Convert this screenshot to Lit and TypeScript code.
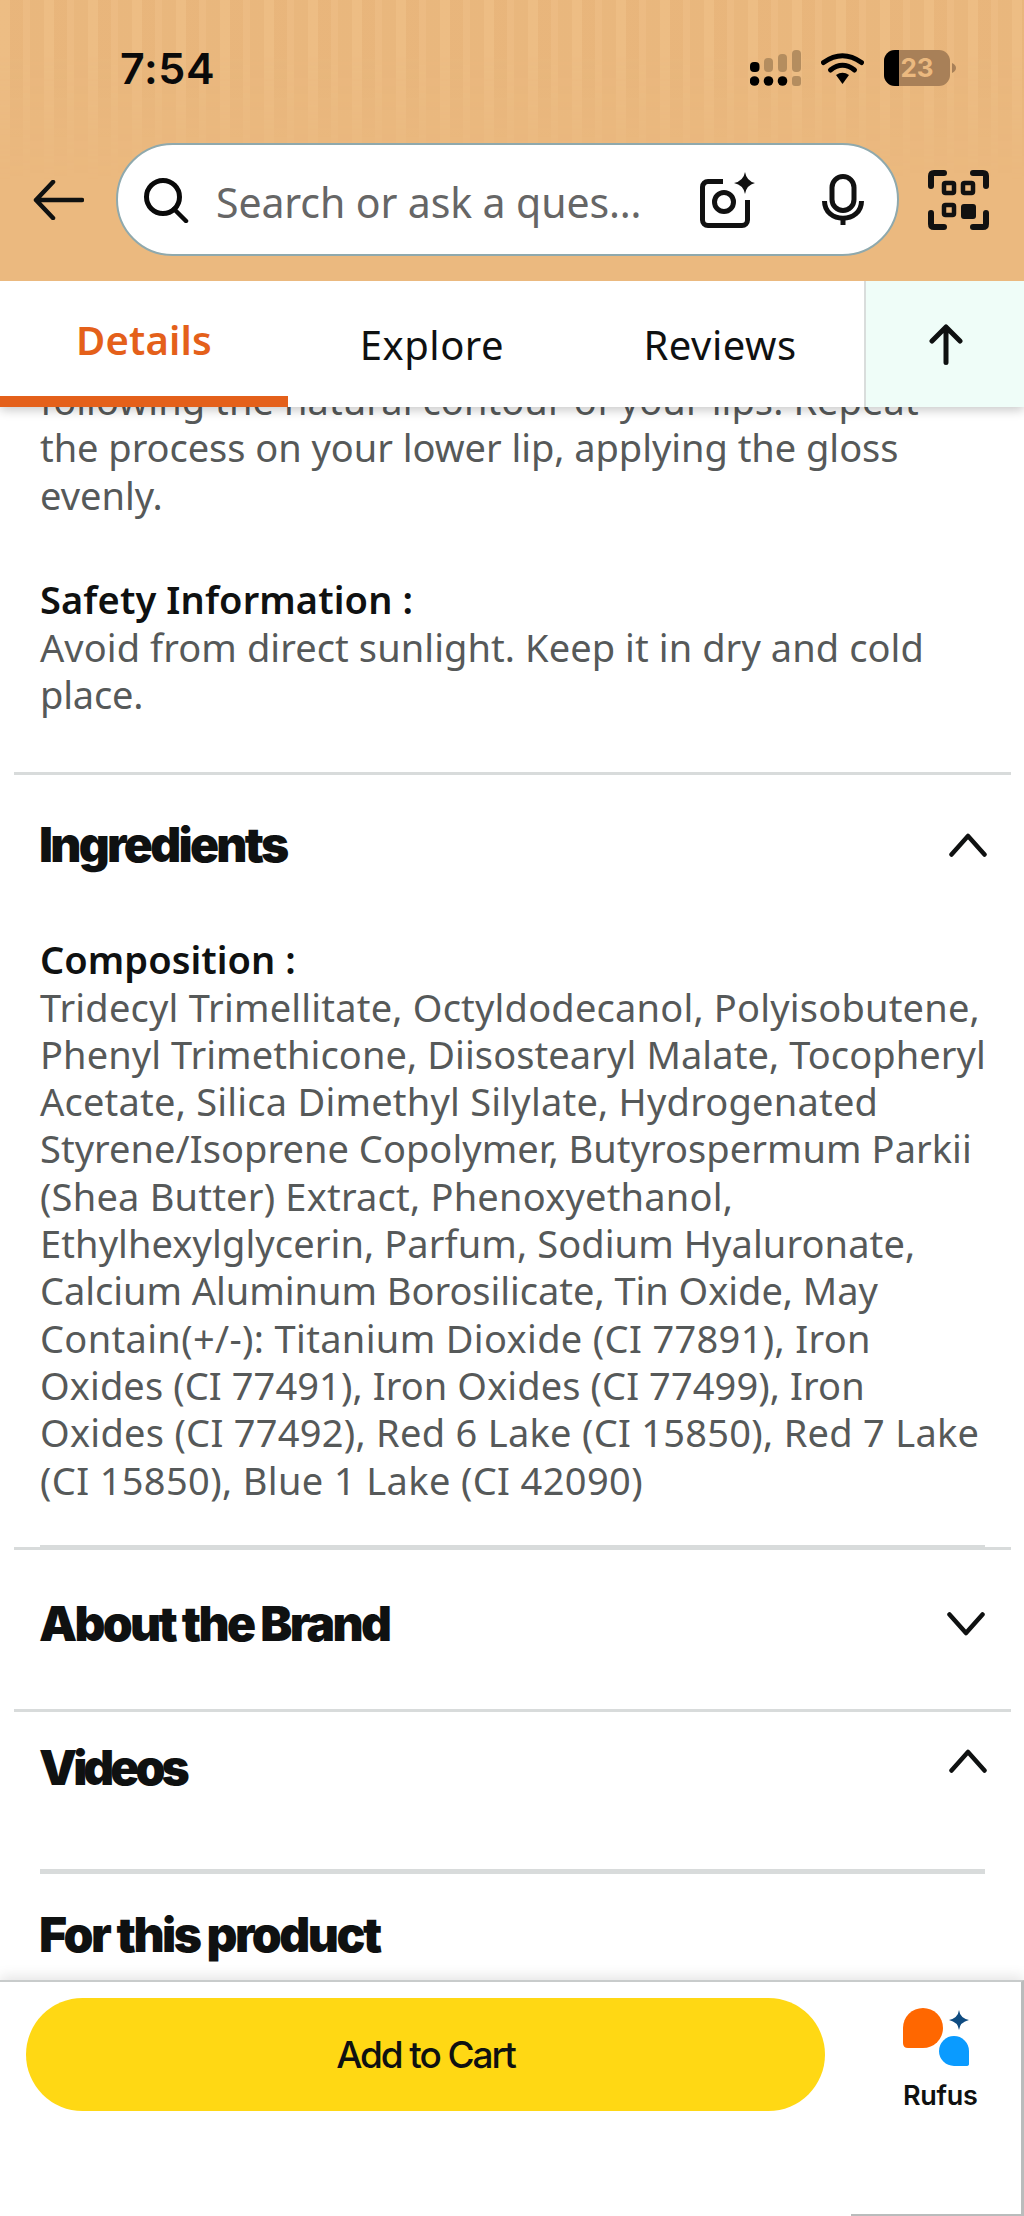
import { LitElement, html, css, svg } from "lit";
import { customElement } from "lit/decorators.js";

type Line = [string, number];

const usage: Line[] = [
  ["following the natural contour of your lips. Repeat", 0.08],
  ["the process on your lower lip, applying the gloss", -0.04],
  ["evenly.", 0],
];
const safety: Line[] = [
  ["Avoid from direct sunlight. Keep it in dry and cold", 0.08],
  ["place.", -0.2],
];
const composition: Line[] = [
  ["Tridecyl Trimellitate, Octyldodecanol, Polyisobutene,", 0.2],
  ["Phenyl Trimethicone, Diisostearyl Malate, Tocopheryl", 0.09],
  ["Acetate, Silica Dimethyl Silylate, Hydrogenated", 0.22],
  ["Styrene/Isoprene Copolymer, Butyrospermum Parkii", 0.05],
  ["(Shea Butter) Extract, Phenoxyethanol,", 0.21],
  ["Ethylhexylglycerin, Parfum, Sodium Hyaluronate,", 0.1],
  ["Calcium Aluminum Borosilicate, Tin Oxide, May", -0.03],
  ["Contain(+/-): Titanium Dioxide (CI 77891), Iron", 0.34],
  ["Oxides (CI 77491), Iron Oxides (CI 77499), Iron", 0.1],
  ["Oxides (CI 77492), Red 6 Lake (CI 15850), Red 7 Lake", 0.28],
  ["(CI 15850), Blue 1 Lake (CI 42090)", 0.37],
];

const lines = (rows: Line[]) =>
  rows.map(([t, ls]) => html`<span class="ln" style="letter-spacing:${ls}px">${t}</span>`);

const chevron = (up: boolean) => html`<svg class="chev" width="38" height="24" viewBox="0 0 38 24" fill="none" stroke="#0f1111" stroke-width="4.500" stroke-linecap="round" stroke-linejoin="round">
  ${up ? svg`<path d="M2.500 21.500 L19 3 L35.500 21.500"/>` : svg`<path d="M2.500 2.500 L19 21 L35.500 2.500"/>`}
</svg>`;

@customElement("app-root")
export class AppRoot extends LitElement {
  static styles = css`
    :host { display: block; width: 1024px; height: 2216px; overflow: hidden; background: #fff; color: #0f1111; font-family: "Noto Sans", sans-serif; }
    .page { display: flex; flex-direction: column; height: 2216px; }
    .header { position: relative; flex: none; height: 281px; background: #ebb97f; display: flex; flex-direction: column; z-index: 3; }
    .stripes { position: absolute; inset: 0 0 100px 0; background: repeating-linear-gradient(90deg, rgba(255,225,175,.1) 0 10px, rgba(190,130,70,.05) 10px 23px, rgba(255,225,175,.07) 23px 30px, rgba(190,130,70,.03) 30px 44px); -webkit-mask-image: linear-gradient(#000 30%, transparent); mask-image: linear-gradient(#000 30%, transparent); }
    .status { position: relative; height: 143px; padding: 50px 0 0 120px; box-sizing: border-box; display: flex; align-items: flex-start; }
    .time { font: 600 43px/36px Inter, sans-serif; color: #0a0a0a; width: 630px; letter-spacing: .6px; }
    .status-icons { display: flex; align-items: flex-start; gap: 20px; }
    .search-row { position: relative; display: flex; align-items: center; padding-left: 33px; height: 113px; }
    .back { flex: none; margin-right: 32px; }
    .searchbar { flex: none; width: 783px; height: 113px; box-sizing: border-box; border: 2.500px solid #8fa9ad; border-radius: 57px; background: #fff; display: flex; align-items: center; padding-left: 25px; }
    .placeholder { font-size: 41px; color: #666; margin-left: 27px; width: 484px; white-space: nowrap; letter-spacing: -.1px; padding-top: 5px; }
    .mic { margin-left: 67px; }
    .qr { margin-left: 29px; flex: none; }
    .tabs { flex: none; height: 126px; display: flex; background: #fff; position: relative; z-index: 2; box-shadow: 0 3px 10px rgba(0,0,0,.22); }
    .tab { flex: none; display: flex; justify-content: center; align-items: center; font-size: 40px; letter-spacing: .5px; box-sizing: border-box; }
    .tab.details { width: 288px; color: #e4601a; font-weight: 600; letter-spacing: .2px; border-bottom: 11px solid #e4601a; height: 126px; align-items: flex-start; padding-top: 33px; line-height: 52px; }
    .tab.explore { width: 288px; }
    .tab.reviews { width: 288px; }
    .up { flex: 1; background: #effdf8; border-left: 2px solid #d9dddc; display: flex; align-items: center; justify-content: center; padding: 1px 0 0 1px; }
    .scroll { flex: 1; min-height: 0; overflow: hidden; }
    .content { margin-top: -30px; }
    .copy { padding: 0 40px; font-size: 38px; line-height: 47.300px; color: #565959; white-space: nowrap; }
    .copy b { display: block; font-weight: 600; color: #0f1111; }
    .ln { display: block; }
    .copy + .copy { margin-top: 57.500px; }
    .rule { height: 3px; margin: 54px 13px 0 14px; background: #d8dbdb; }
    .sec { display: flex; justify-content: space-between; padding: 0 39px 0 39px; align-items: center; }
    h2 { margin: 0; font: 900 48px/56px Inter, sans-serif; letter-spacing: -2.700px; color: #0f1111; }
    .ing { margin-top: 42px; }
    .ing svg { margin-right: -2px; }
    .copy.ing-copy { margin-top: 63px; }
    .double-top { height: 2px; margin: 41px 39px 0 40px; background: #d8dbdb; }
    .double-bot { height: 3px; margin: 0 13px 0 14px; background: #d8dbdb; }
    .about { margin-top: 46px; }
    .rule2 { height: 3px; margin: 57px 13px 0 14px; background: #d8dbdb; }
    .videos { margin-top: 28px; align-items: flex-start; }
    .videos h2 { letter-spacing: -4px; }
    .videos svg { margin-top: 9px; margin-right: -2px; }
    .rule3 { height: 5px; margin: 73px 39px 0 40px; background: #d8dbdb; }
    .fort { padding: 33px 39px 0; }
    .fort h2 { letter-spacing: -2.500px; }
    .bar { flex: none; height: 236px; box-sizing: border-box; position: relative; z-index: 2; background: #fff; border-top: 2px solid #c8cbcb; border-right: 3px solid #b9bcbc; box-shadow: 0 -4px 12px rgba(0,0,0,.1); display: flex; align-items: flex-start; padding: 16px 0 0 26px; }
    .bar::after { content: ""; position: absolute; right: -3px; bottom: 0; width: 173px; height: 2px; background: #b9bcbc; }
    .cart { flex: none; width: 799px; height: 113px; border-radius: 57px; background: #ffd814; display: flex; align-items: center; justify-content: center; font: 500 37px/1 Inter, sans-serif; letter-spacing: -2.100px; color: #0f1111; border: none; padding: 0; box-sizing: border-box; }
    .rufus { margin-left: 78px; display: flex; flex-direction: column; align-items: flex-start; font: 600 27px/32px Inter, sans-serif; color: #0f1111; padding-top: 10px; letter-spacing: -.3px; }
    .rufus svg { margin-bottom: 12px; }
    svg { display: block; flex: none; }
  `;

  render() {
    return html`<div class="page">
      <div class="header">
        <div class="stripes"></div>
        <div class="status">
          <div class="time">7:54</div>
          <div class="status-icons">
            <svg width="51" height="36" viewBox="0 0 51 36">
              <g fill="#000"><circle cx="4.500" cy="31" r="4.800"/><circle cx="18.500" cy="31" r="4.800"/><circle cx="32.500" cy="31" r="4.800"/><rect x="0" y="12" width="9.500" height="10" rx="4"/></g>
              <g fill="#b48d5f"><rect x="14" y="8" width="9" height="14" rx="4"/><rect x="28" y="4" width="9" height="18" rx="4"/><rect x="42" y="0" width="9" height="22" rx="4"/><rect x="42" y="26" width="9" height="10" rx="3"/></g>
            </svg>
            <svg style="margin-top:2px" width="43" height="33" viewBox="0 0 43 33">
              <g fill="none" stroke="#000" stroke-linecap="round"><path d="M2.500 10.500 Q21.500 -3 40.500 10.500" stroke-width="5"/><path d="M9.500 18 Q21.500 8.500 33.500 18" stroke-width="5"/></g>
              <path d="M15 23 Q21.500 18.500 28 23 L21.500 32 Z" fill="#000"/>
            </svg>
            <svg width="73" height="36" viewBox="0 0 73 36">
              <rect x="0" y="0" width="66" height="36" rx="11" fill="#a88058"/>
              <path d="M15 0 H11 A11 11 0 0 0 0 11 V25 A11 11 0 0 0 11 36 H15 Z" fill="#000"/>
              <path d="M68 13 Q72 15 72 18 Q72 21 68 23 Z" fill="#a88058"/>
              <text x="33" y="27" text-anchor="middle" font-family="Inter, sans-serif" font-weight="700" font-size="26" fill="#ebb97f">23</text>
            </svg>
          </div>
        </div>
        <div class="search-row">
          <svg class="back" width="51" height="40" viewBox="0 0 51 40" fill="none" stroke="#0f1111" stroke-width="4.500" stroke-linecap="round" stroke-linejoin="round"><path d="M49 20 H3 M20 2 L3 20 L20 38"/></svg>
          <div class="searchbar">
            <svg width="46" height="46" viewBox="0 0 46 46" fill="none" stroke="#0a0a0a" stroke-linecap="round"><circle cx="20" cy="20" r="16.500" stroke-width="5"/><path d="M31 32 L43 44" stroke-width="4.500"/></svg>
            <div class="placeholder">Search or ask a ques…</div>
            <svg width="55" height="56" viewBox="0 0 55 56" fill="none" stroke="#111" stroke-width="5" stroke-linejoin="round">
              <path d="M23 9.500 H8 A5.500 5.500 0 0 0 2.500 15 V48 A5.500 5.500 0 0 0 8 53.500 H42 A5.500 5.500 0 0 0 47.500 48 V28"/>
              <circle cx="24" cy="30" r="9.500"/>
              <path d="M45 0 Q46.500 9 55 11 Q46.500 13 45 22 Q43.500 13 34 11 Q43.500 9 45 0 Z" fill="#111" stroke="none"/>
            </svg>
            <svg class="mic" width="42" height="51" viewBox="0 0 42 51" fill="none" stroke="#111" stroke-width="5">
              <rect x="10" y="2.500" width="22" height="34" rx="11"/>
              <path d="M2.500 27 C2.500 50 39.500 50 39.500 27"/>
              <path d="M21 42 V51"/>
            </svg>
          </div>
          <svg class="qr" width="61" height="60" viewBox="0 0 61 60" fill="none" stroke="#111" stroke-width="6" stroke-linecap="round" stroke-linejoin="round">
            <path d="M16 3 H6 Q3 3 3 6 V16"/>
            <path d="M45 3 H55 Q58 3 58 6 V16"/>
            <path d="M3 43 V54 Q3 57 6 57 H16"/>
            <path d="M58 43 V54 Q58 57 55 57 H45"/>
            <rect x="16" y="13" width="10" height="10" rx="1.500" stroke-width="4.500"/>
            <rect x="35" y="13" width="10" height="10" rx="1.500" stroke-width="4.500"/>
            <rect x="16" y="35" width="10" height="10" rx="1.500" stroke-width="4.500"/>
            <rect x="33" y="34" width="15" height="15" rx="3" fill="#111" stroke="none"/>
          </svg>
        </div>
      </div>
      <div class="tabs">
        <div class="tab details">Details</div>
        <div class="tab explore">Explore</div>
        <div class="tab reviews">Reviews</div>
        <div class="up">
          <svg width="34" height="41" viewBox="0 0 34 41" fill="none" stroke="#0f1111" stroke-width="5" stroke-linecap="round" stroke-linejoin="round"><path d="M17 38.500 V3 M3 17 L17 3 L31 17"/></svg>
        </div>
      </div>
      <div class="scroll">
        <div class="content">
          <div class="copy">${lines(usage)}</div>
          <div class="copy"><b style="letter-spacing:.11px">Safety Information :</b>${lines(safety)}</div>
          <div class="rule"></div>
          <div class="sec ing"><h2>Ingredients</h2>${chevron(true)}</div>
          <div class="copy ing-copy"><b style="letter-spacing:.05px">Composition :</b>${lines(composition)}</div>
          <div class="double-top"></div>
          <div class="double-bot"></div>
          <div class="sec about"><h2>About the Brand</h2>${chevron(false)}</div>
          <div class="rule2"></div>
          <div class="sec videos"><h2>Videos</h2>${chevron(true)}</div>
          <div class="rule3"></div>
          <div class="fort"><h2>For this product</h2></div>
        </div>
      </div>
      <div class="bar">
        <button class="cart">Add to Cart</button>
        <div class="rufus">
          <svg width="68" height="60" viewBox="0 0 68 60">
            <path d="M0 20 A20 20 0 1 1 20 40 H5 Q0 40 0 35 Z" fill="#ff6700"/>
            <path d="M66 56 Q66 58 63 58 H51 A15 15 0 1 1 66 43 Z" fill="#0a9bff"/>
            <path d="M56 2 Q57 10 66 12 Q57 14 56 22 Q55 14 46 12 Q55 10 56 2 Z" fill="#0f4c81"/>
          </svg>
          <span>Rufus</span>
        </div>
      </div>
    </div>`;
  }
}
